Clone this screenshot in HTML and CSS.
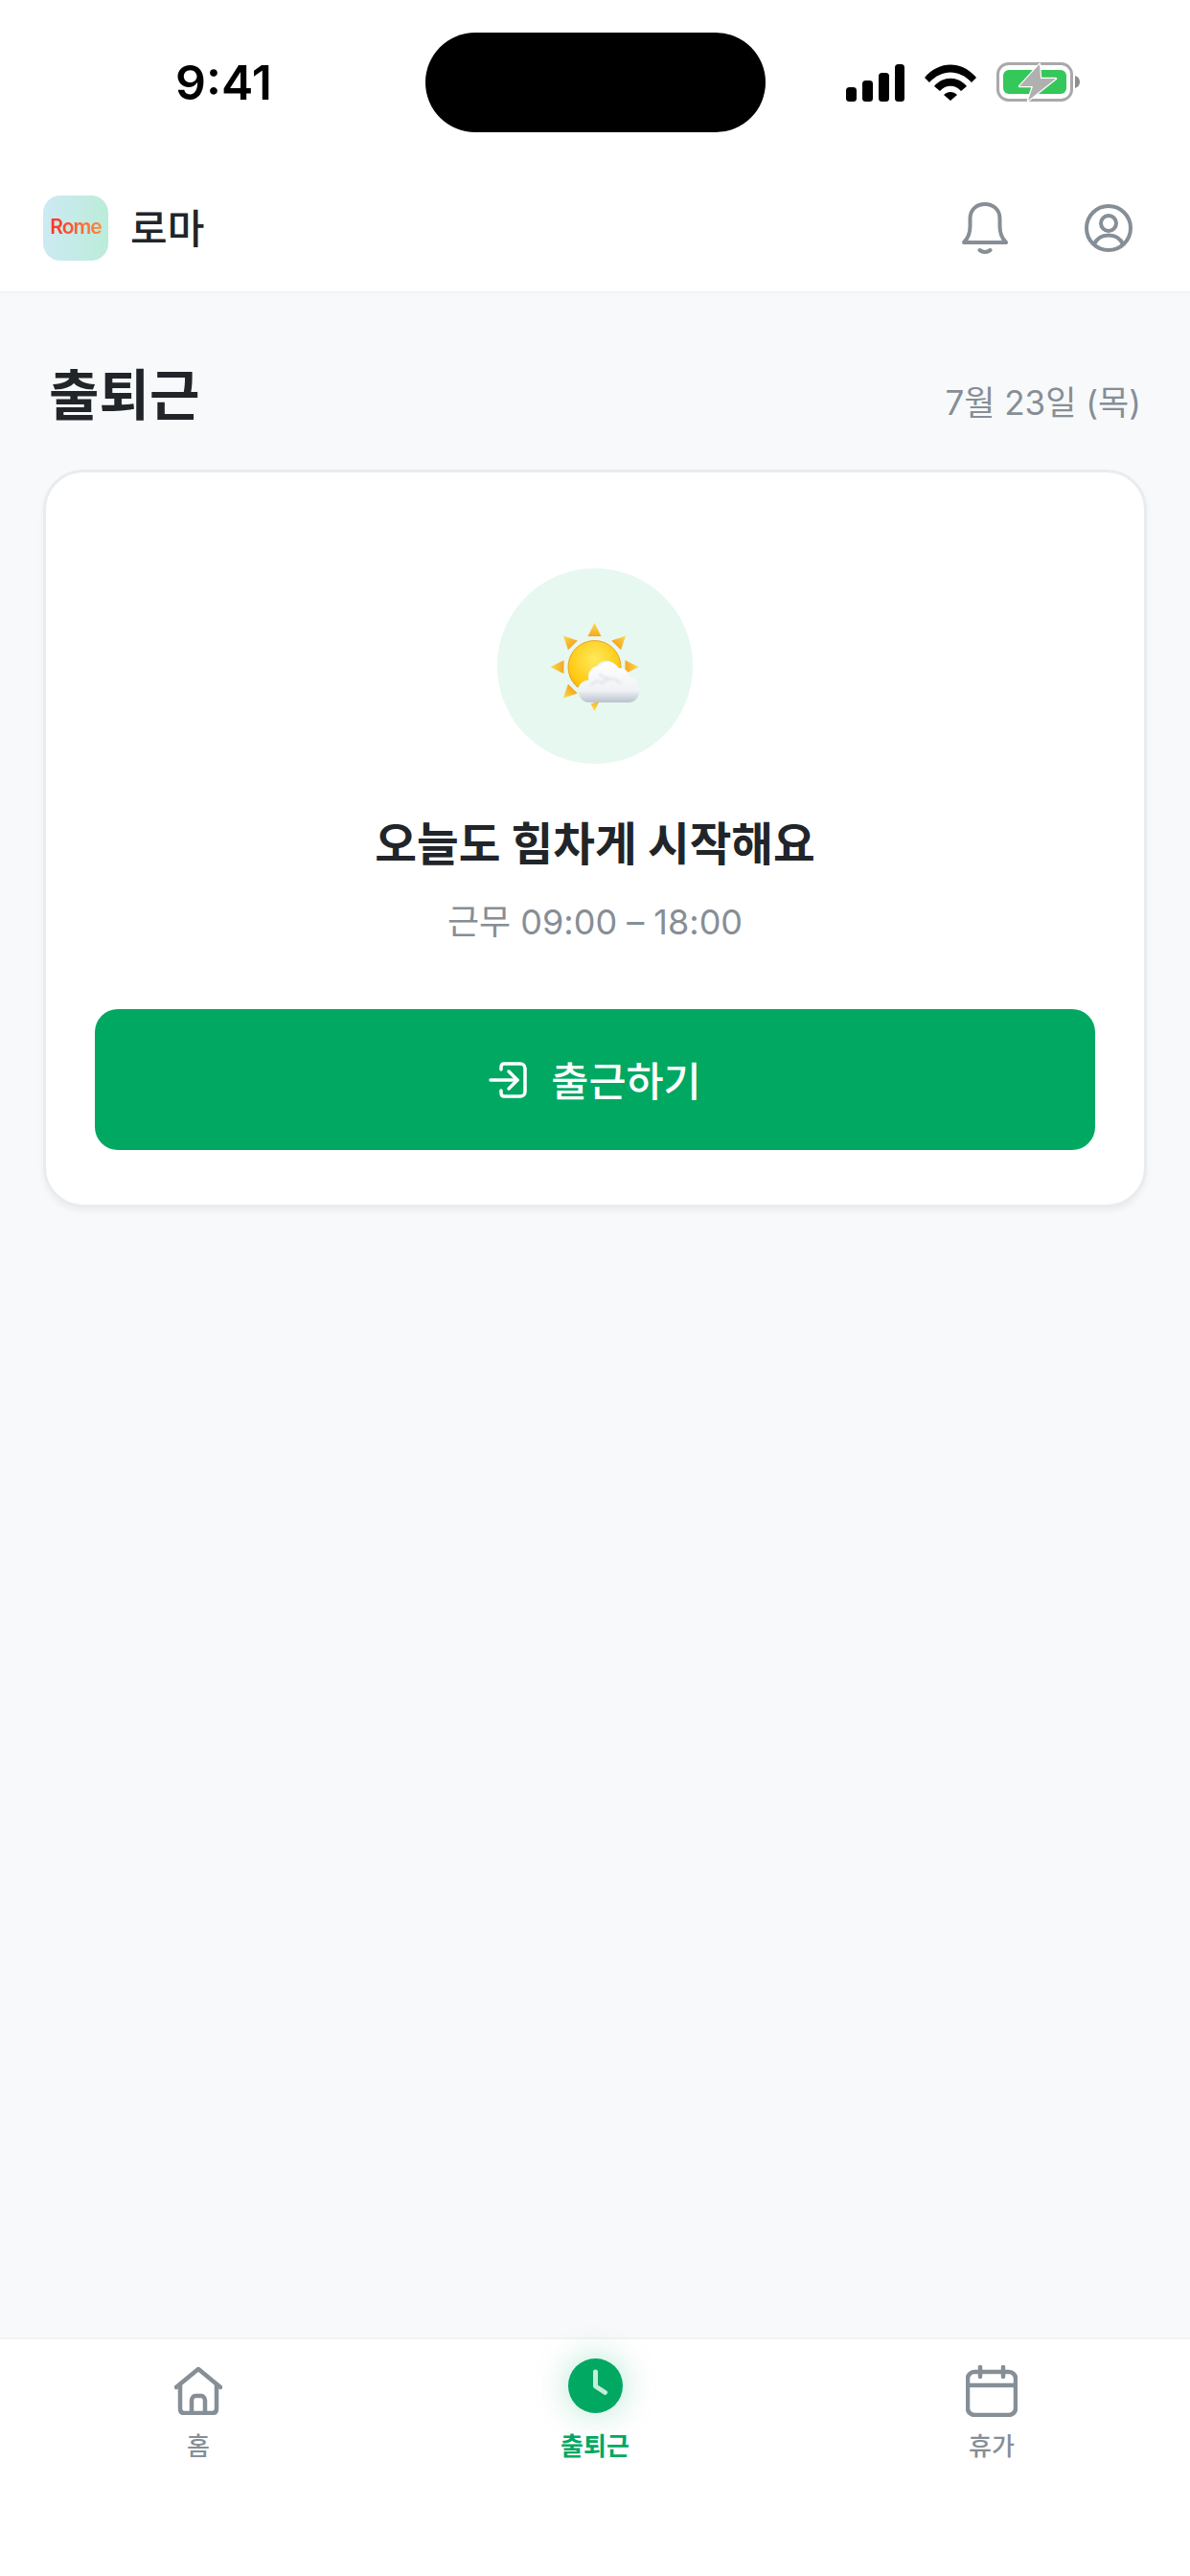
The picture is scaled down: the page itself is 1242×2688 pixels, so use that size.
FILE: index.html
```html
<!DOCTYPE html>
<html lang="ko">
<head>
  <meta charset="UTF-8">
  <meta name="viewport" content="width=device-width, initial-scale=1.0">
  <title>출퇴근</title>
  <link rel="stylesheet" href="styles.css">
</head>
<body>
  <div class="screen">
    <!-- 상태 표시줄 -->
    <div class="status-bar">
      <span class="status-time">9:41</span>
      <div class="island"></div>
      <div class="status-icons">
        <svg class="icon-signal" width="61" height="39" viewBox="0 0 61 39">
          <rect x="0" y="24" width="11" height="15" rx="3.5"/>
          <rect x="17" y="17" width="11" height="22" rx="3.5"/>
          <rect x="34" y="9" width="11" height="30" rx="3.5"/>
          <rect x="51" y="0" width="10" height="39" rx="3.5"/>
        </svg>
        <svg class="icon-wifi" width="54" height="38" viewBox="0 0 54 38">
          <path d="M0 14 C15 -4 39 -4 54 14 L49 19 C36 5 18 5 5 19 Z"/>
          <path d="M10 23 C19 12 35 12 44 23 L38 28 C32 21 22 21 16 28 Z"/>
          <path d="M20 32 C24 28 30 28 34 32 L27 38 Z"/>
        </svg>
        <svg class="icon-battery" width="88" height="42" viewBox="0 0 88 42">
          <rect x="1.5" y="1.5" width="77" height="38" rx="11" fill="none" stroke="#a9a9a9" stroke-width="3"/>
          <rect x="7" y="8" width="66" height="25" rx="6" fill="#34c759"/>
          <path d="M82 14 C85 15 87 17 87 20.500 C87 24 85 26 82 27 Z" fill="#8e8e8e"/>
          <path d="M45 2 L24 25 L38 25 L33 40 L62 17 L46 17 Z" fill="#b0b0b0" stroke="#fff" stroke-width="2.500" stroke-linejoin="round" paint-order="stroke"/>
        </svg>
      </div>
    </div>

    <!-- 상단 헤더 -->
    <header class="app-header">
      <div class="brand">
        <div class="brand-logo"><span class="brand-logo-text">Rome</span></div>
        <span class="brand-name">로마</span>
      </div>
      <div class="header-actions">
        <svg class="icon-bell" width="50" height="54" viewBox="0 0 50 54" fill="none" stroke="#868e96" stroke-width="4" stroke-linecap="round" stroke-linejoin="round">
          <path d="M3 42 C8 37 9.500 32 9.500 25 L9.500 17 C9.500 8 16 2 25 2 C34 2 40.500 8 40.500 17 L40.500 25 C40.500 32 42 37 47 42 Z"/>
          <path d="M19.500 50 C23 52.500 27 52.500 30.500 50"/>
        </svg>
        <svg class="icon-user" width="50" height="50" viewBox="0 0 50 50" fill="none" stroke="#868e96" stroke-width="4">
          <circle cx="25" cy="25" r="23"/>
          <circle cx="25" cy="20" r="8"/>
          <path d="M10 42 C13 35 18 32.500 25 32.500 C32 32.500 37 35 40 42"/>
        </svg>
      </div>
    </header>

    <main class="content">
      <div class="title-row">
        <h1 class="page-title">출퇴근</h1>
        <span class="page-date">7월 23일 (목)</span>
      </div>

      <section class="card">
        <div class="weather-badge">
          <svg width="100" height="100" viewBox="0 0 100 100">
            <defs>
              <linearGradient id="ray" x1="0" y1="0" x2="0" y2="1">
                <stop offset="0" stop-color="#fddc4a"/>
                <stop offset="1" stop-color="#f5a623"/>
              </linearGradient>
              <radialGradient id="sun" cx="0.5" cy="0.35" r="0.7">
                <stop offset="0" stop-color="#ffe95c"/>
                <stop offset="0.75" stop-color="#fdc80f"/>
                <stop offset="1" stop-color="#f2a011"/>
              </radialGradient>
              <linearGradient id="cloud" gradientUnits="userSpaceOnUse" x1="0" y1="46" x2="0" y2="88">
                <stop offset="0" stop-color="#ffffff"/>
                <stop offset="0.7" stop-color="#f1f2f5"/>
                <stop offset="1" stop-color="#b9c2ce"/>
              </linearGradient>
              <filter id="soft" x="-20%" y="-20%" width="140%" height="140%">
                <feGaussianBlur stdDeviation="1.500"/>
              </filter>
            </defs>
            <g transform="translate(-0.500 1)">
              <g fill="url(#ray)">
                <path id="r" d="M50 4 L57 18 L43 18 Z"/>
                <use href="#r" transform="rotate(45 50 50)"/>
                <use href="#r" transform="rotate(90 50 50)"/>
                <use href="#r" transform="rotate(180 50 50)"/>
                <use href="#r" transform="rotate(225 50 50)"/>
                <use href="#r" transform="rotate(270 50 50)"/>
                <use href="#r" transform="rotate(315 50 50)"/>
              </g>
              <circle cx="50" cy="50" r="27.500" fill="url(#sun)" stroke="#f0a020" stroke-width="1"/>
            </g>
            <g fill="#e6f8f0" stroke="#e6f8f0" stroke-width="3">
              <circle cx="44" cy="77" r="11"/>
              <circle cx="85" cy="77" r="11"/>
              <circle cx="62" cy="57" r="11"/>
            </g>
            <g fill="url(#cloud)">
              <circle cx="44" cy="77" r="11"/>
              <circle cx="54" cy="61" r="11"/>
              <circle cx="64" cy="58" r="12"/>
              <circle cx="76" cy="62" r="10"/>
              <circle cx="85" cy="77" r="11"/>
              <circle cx="84" cy="72" r="11"/>
              <rect x="44" y="62" width="41" height="26"/>
            </g>
            <g fill="none" stroke="#d6dae1" stroke-width="1.500" filter="url(#soft)" stroke-linecap="round">
              <path d="M46 70 C50 65 55 65 58 68"/>
              <path d="M58 68 C62 62 72 62 76 68"/>
              <path d="M55 58 C58 62 60 63 63 62"/>
            </g>
          </svg>
        </div>
        <h2 class="card-title">오늘도 힘차게 시작해요</h2>
        <p class="card-sub">근무 09:00 – 18:00</p>
        <button class="check-in">
          <svg width="40" height="38" viewBox="0 0 40 38" fill="none" stroke="#fff" stroke-width="3.500" stroke-linecap="round" stroke-linejoin="round">
            <path d="M13 8 L13 6 C13 3 14 2 16 2 L33 2 C36 2 38 4 38 7 L38 31 C38 34 36 36 33 36 L16 36 C14 36 13 35 13 32 L13 30"/>
            <path d="M2 19 L30 19"/>
            <path d="M21 10 L30 19 L21 28"/>
          </svg>
          <span class="check-in-label">출근하기</span>
        </button>
      </section>
    </main>

    <!-- 하단 탭 -->
    <nav class="tab-bar">
      <div class="tab">
        <div class="tab-icon">
          <svg width="50" height="50" viewBox="0 0 50 50" fill="none" stroke="#868e96" stroke-width="4.500" stroke-linecap="round" stroke-linejoin="round">
            <path d="M2 21 L25 2 L48 21"/>
            <path d="M6 18 L6 43 C6 46 7 48 10 48 L40 48 C43 48 44 46 44 43 L44 18"/>
            <path d="M18 48 L18 35 C18 32 20 30 22 30 L28 30 C30 30 32 32 32 35 L32 48"/>
          </svg>
        </div>
        <span class="tab-label">홈</span>
      </div>
      <div class="tab tab-active">
        <div class="tab-icon">
          <div class="clock-badge">
            <svg width="57" height="57" viewBox="0 0 57 57" fill="none" stroke="#c4eedb" stroke-width="5" stroke-linecap="round" stroke-linejoin="round">
              <path d="M28.500 14 L28.500 29 L38.500 35.500"/>
            </svg>
          </div>
        </div>
        <span class="tab-label">출퇴근</span>
      </div>
      <div class="tab">
        <div class="tab-icon">
          <svg width="54" height="54" viewBox="0 0 54 54" fill="none" stroke="#868e96" stroke-width="4.500" stroke-linecap="round" stroke-linejoin="round">
            <rect x="2" y="7" width="50" height="45" rx="7"/>
            <path d="M2 21 L52 21"/>
            <path d="M15 2 L15 12"/>
            <path d="M39 2 L39 12"/>
          </svg>
        </div>
        <span class="tab-label">휴가</span>
      </div>
    </nav>
  </div>
</body>
</html>
```

FILE: styles.css
```css
* {
  box-sizing: border-box;
}
body {
  margin: 0;
  background: #fff;
  color: #212529;
  font-family: Inter, "Noto Sans CJK KR", "Noto Sans", sans-serif;
}
.screen {
  display: flex;
  flex-direction: column;
  width: 1242px;
  height: 2688px;
  overflow: hidden;
}

/* status bar */
.status-bar {
  display: grid;
  grid-template-columns: 1fr 355px 1fr;
  align-items: center;
  height: 172px;
  padding: 0 114px;
  background: #fff;
}
.status-time {
  margin-left: 69px;
  color: #000;
  font-size: 50px;
  font-weight: 600;
  line-height: 60px;
}
.island {
  height: 104px;
  border-radius: 52px;
  background: #000;
}
.status-icons {
  display: flex;
  align-items: center;
  justify-content: flex-end;
  gap: 21px;
}
.status-icons svg {
  display: block;
  fill: #000;
}

/* app header */
.app-header {
  display: flex;
  align-items: center;
  justify-content: space-between;
  height: 134px;
  padding: 0 60px 0 45px;
  border-bottom: 2px solid #f1f3f5;
  background: #fff;
}
.brand {
  display: flex;
  align-items: center;
  gap: 23px;
}
.brand-logo {
  display: flex;
  align-items: center;
  justify-content: center;
  width: 68px;
  height: 68px;
  border-radius: 18px;
  background: linear-gradient(90deg, #cdeaf3, #bbecd9);
}
.brand-logo-text {
  margin-bottom: 4px;
  background: linear-gradient(90deg, #ff3028, #ff8a3c);
  -webkit-background-clip: text;
  background-clip: text;
  color: transparent;
  font-size: 21px;
  font-weight: 600;
  letter-spacing: -1px;
}
.brand-name {
  margin-bottom: 6px;
  font-size: 42px;
  font-weight: 500;
}
.header-actions {
  display: flex;
  align-items: center;
  gap: 79px;
}
.header-actions svg {
  display: block;
}

/* content */
.content {
  flex: 1;
  padding: 0 45px;
  background: #f8f9fa;
}
.title-row {
  display: flex;
  align-items: baseline;
  justify-content: space-between;
  height: 184px;
  padding: 72px 6px 0;
}
.page-title {
  margin: 0;
  font-size: 57px;
  font-weight: 700;
  line-height: 70px;
}
.page-date {
  color: #868e96;
  font-size: 35px;
}
.card {
  display: flex;
  flex-direction: column;
  align-items: center;
  height: 770px;
  padding: 100px 51px 0;
  border: 3px solid #e9ecef;
  border-radius: 42px;
  background: #fff;
  box-shadow: 0 4px 6px rgba(0, 0, 0, 0.05);
}
.weather-badge {
  display: flex;
  align-items: center;
  justify-content: center;
  width: 204px;
  height: 204px;
  border-radius: 50%;
  background: #e6f8f0;
}
.card-title {
  margin: 54px 0 0;
  font-size: 47.5px;
  font-weight: 700;
  line-height: 60px;
}
.card-sub {
  margin: 29px 0 0;
  color: #868e96;
  font-size: 36px;
  line-height: 44px;
}
.check-in {
  display: flex;
  align-items: center;
  justify-content: center;
  gap: 25px;
  width: 100%;
  height: 147px;
  margin-top: 69px;
  border: none;
  border-radius: 24px;
  background: #00a862;
  color: #fff;
  font-family: inherit;
  font-size: 42.5px;
  font-weight: 500;
}
.check-in-label {
  margin-bottom: 2px;
}

/* bottom tabs */
.tab-bar {
  display: grid;
  grid-template-columns: repeat(3, 1fr);
  height: 249px;
  padding-top: 24px;
  border-top: 2px solid #f1f3f5;
  background: #fff;
}
.tab {
  display: flex;
  flex-direction: column;
  align-items: center;
  gap: 10px;
}
.tab-icon {
  display: flex;
  align-items: center;
  justify-content: center;
  height: 60px;
}
.tab-icon svg {
  display: block;
}
.tab-label {
  color: #868e96;
  font-size: 26px;
  font-weight: 500;
  line-height: 36px;
}
.tab-active .tab-label {
  color: #00a862;
  font-weight: 700;
}
.clock-badge {
  width: 57px;
  height: 57px;
  margin-bottom: 12px;
  border-radius: 50%;
  background: #00a862;
  box-shadow: 0 0 36px rgba(0, 168, 98, 0.3);
}
```
